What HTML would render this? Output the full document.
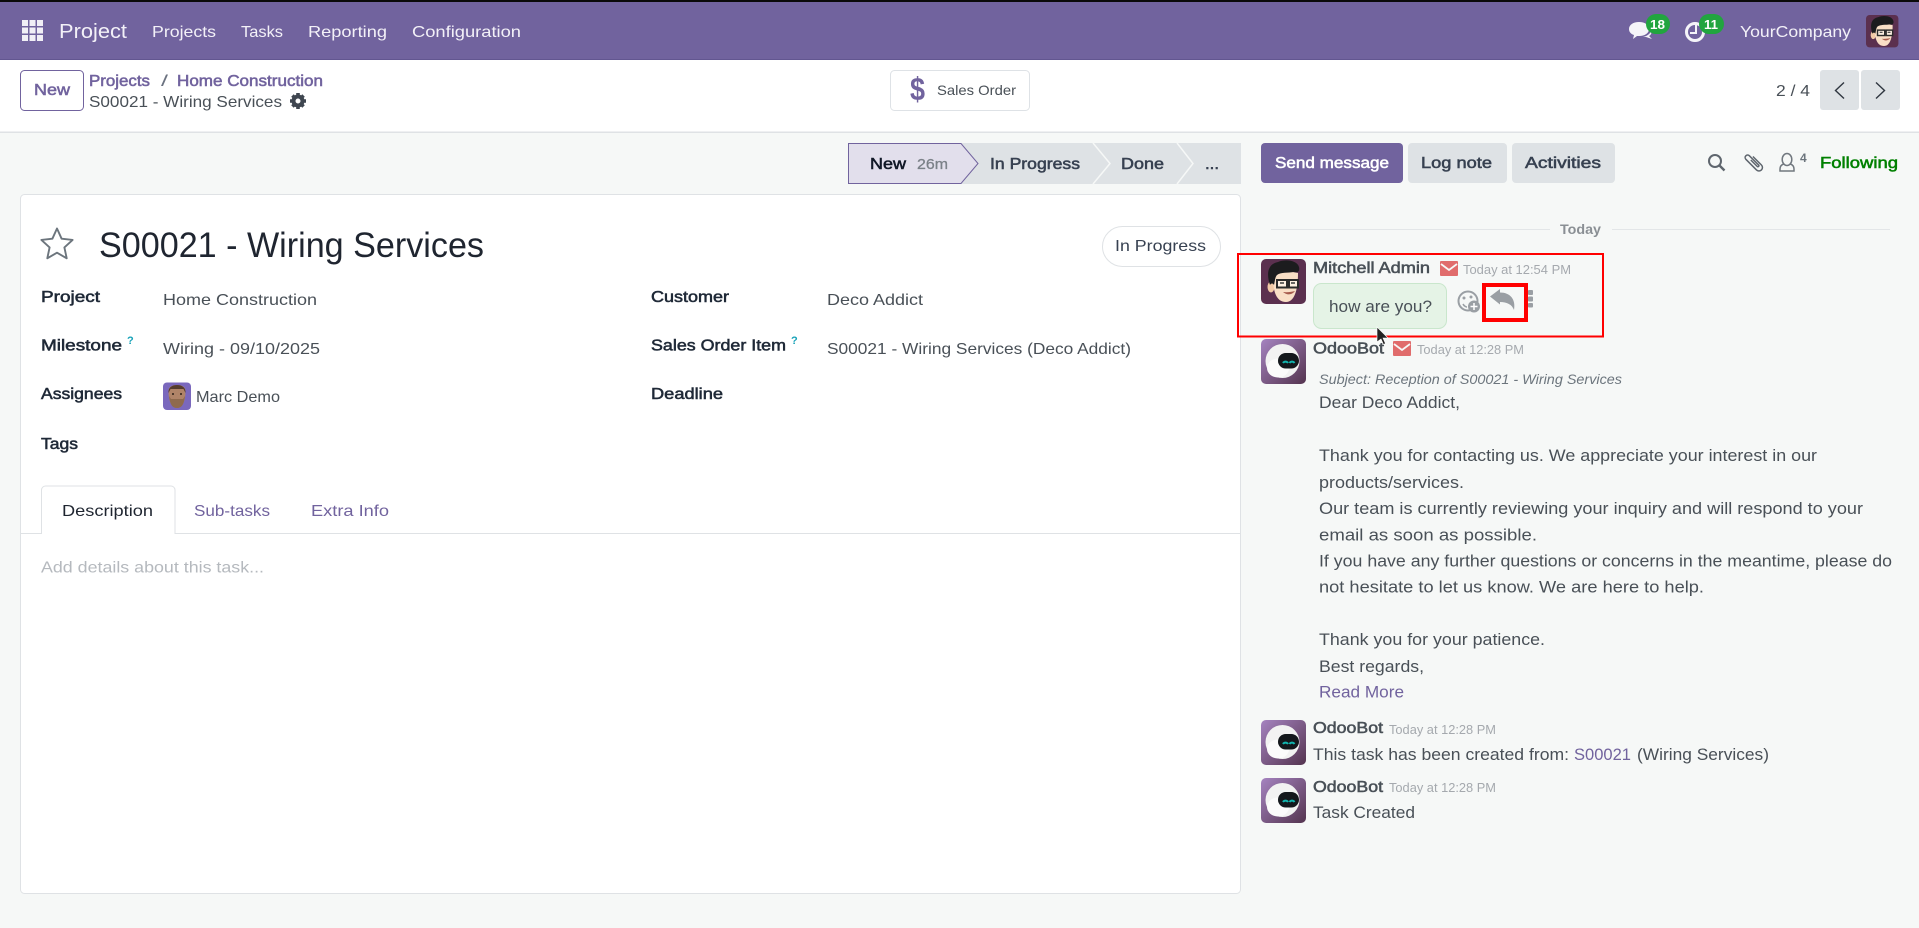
<!DOCTYPE html>
<html lang="en"><head><meta charset="utf-8"><title>S00021 - Wiring Services</title>
<style>
html,body{margin:0;padding:0;background:#f6f8f7;width:1919px;height:928px;overflow:hidden}
svg{display:block;position:absolute;left:0;top:0}
text{font-family:"Liberation Sans",sans-serif;font-size:16px;fill:#495057}
.n{fill:#f3f1f8}
.b{fill:currentColor;stroke:currentColor;stroke-width:.55px}
.l{font-size:16px;color:#1f2937}
.v{fill:#495057;font-size:16px}
.p{fill:#71639e}
.m{fill:#495057;font-size:16.5px}
.nm{color:#495057;font-size:16px}
.t{fill:#a5a9ae;font-size:13px}
.d{fill:#fff;font-weight:bold;font-size:13px}
</style></head><body>
<svg width="1919" height="928" viewBox="0 0 1919 928" xmlns="http://www.w3.org/2000/svg">
<defs>
<linearGradient id="bot" x1="0" y1="0" x2="1" y2="1"><stop offset="0" stop-color="#a583c0"/><stop offset="1" stop-color="#54344f"/></linearGradient>
<g id="botav">
<rect width="45" height="45" rx="5" fill="url(#bot)"/>
<circle cx="21.500" cy="22" r="17" fill="#f2f2f2"/><ellipse cx="17" cy="29" rx="11" ry="9.500" fill="#fbfbfb"/>
<rect x="17" y="14" width="21" height="15.500" rx="7.700" fill="#14181c"/>
<path d="M22 24a3 3 0 0 1 5 0M28.500 24a3 3 0 0 1 5 0" fill="none" stroke="#12b5ae" stroke-width="2"/>
</g>
<g id="mitch">
<rect width="45" height="45" rx="5" fill="#5b304f"/>
<ellipse cx="10" cy="28" rx="3.500" ry="5.500" fill="#f2c9a6"/>
<path d="M12 18C12 32 15 43 25 43C33 43 37 32 37 14L16 10Z" fill="#f9dfc6"/>
<path d="M9 26C5 14 7 5 17 3C24 0 36 1 38 8C39 12 37 14 33 13C27 14 20 13 16 16C14 18 14 22 13 26C12 24 10 24 9 26Z" fill="#1c1c1e"/>
<rect x="16" y="21" width="10" height="7.500" fill="#fdf0e2" stroke="#2b2b2b" stroke-width="2"/>
<rect x="28" y="21" width="9" height="7.500" fill="#fdf0e2" stroke="#2b2b2b" stroke-width="2"/>
<path d="M26 23h2" stroke="#2b2b2b" stroke-width="2"/>
<path d="M19 24h4M30 24h4" stroke="#3a3a3a" stroke-width="1.500"/>
<path d="M22 33c4 3.500 9 3 12-1-4 1-8 1.500-12 1z" fill="#a65b4d"/>
</g>
<g id="env"><rect width="18" height="15" rx="1" fill="#e06c6c"/><path d="M1 3l8 6 8-6" fill="none" stroke="#f6f8f7" stroke-width="1.800"/></g>
</defs>

<!-- top bar -->
<rect width="1919" height="2" fill="#0a0a0a"/>
<rect y="2" width="1919" height="58" fill="#71639e"/>
<rect y="59" width="1919" height="1" fill="#625690"/>
<g fill="#f1eff6"><rect x="22" y="20" width="6" height="6"/><rect x="29.500" y="20" width="6" height="6"/><rect x="37" y="20" width="6" height="6"/><rect x="22" y="27.500" width="6" height="6"/><rect x="29.500" y="27.500" width="6" height="6"/><rect x="37" y="27.500" width="6" height="6"/><rect x="22" y="35" width="6" height="6"/><rect x="29.500" y="35" width="6" height="6"/><rect x="37" y="35" width="6" height="6"/></g>
<text x="59" y="38" class="n" style="font-size:20px" textLength="68" lengthAdjust="spacingAndGlyphs">Project</text>
<text x="152" y="37" class="n" textLength="64" lengthAdjust="spacingAndGlyphs">Projects</text>
<text x="241" y="37" class="n" textLength="42" lengthAdjust="spacingAndGlyphs">Tasks</text>
<text x="308" y="37" class="n" textLength="79" lengthAdjust="spacingAndGlyphs">Reporting</text>
<text x="412" y="37" class="n" textLength="109" lengthAdjust="spacingAndGlyphs">Configuration</text>

<!-- systray -->
<path d="M1639 22c6 0 10 3 10 7s-4 7-10 7h-2l-4 3 1-4c-3-1-5-3-5-6 0-4 4-7 10-7z" fill="#f5f4f9"/>
<path d="M1651 31c1 2 0 4-2 5l3 3-6-2h-3c4-1 7-3 8-6z" fill="#f5f4f9"/>
<rect x="1646" y="14" width="24" height="20" rx="10" fill="#21a53f"/>
<text x="1650" y="29" class="d" textLength="15" lengthAdjust="spacingAndGlyphs">18</text>
<circle cx="1695" cy="32" r="8.500" fill="none" stroke="#f5f4f9" stroke-width="3"/>
<path d="M1696 25v8h-6" fill="none" stroke="#f5f4f9" stroke-width="2"/>
<rect x="1699" y="14" width="25" height="20" rx="10" fill="#21a53f"/>
<text x="1704" y="29" class="d" textLength="14" lengthAdjust="spacingAndGlyphs">11</text>
<text x="1740" y="37" class="n" textLength="111" lengthAdjust="spacingAndGlyphs">YourCompany</text>
<g transform="translate(1866 15) scale(.72)"><use href="#mitch"/></g>

<!-- control panel -->
<rect y="60" width="1919" height="72" fill="#fff"/>
<rect y="131.500" width="1919" height="1.500" fill="#dfe2e5"/>
<rect x="20.500" y="70.500" width="63" height="40" rx="4" fill="#fff" stroke="#71639e"/>
<text x="34" y="95" class="b" style="color:#71639e" textLength="36" lengthAdjust="spacingAndGlyphs">New</text>
<text x="89" y="86" class="b" style="color:#71639e" textLength="61" lengthAdjust="spacingAndGlyphs">Projects</text>
<text x="161" y="86" style="fill:#6b7280" textLength="7" lengthAdjust="spacingAndGlyphs">/</text>
<text x="177" y="86" class="b" style="color:#71639e" textLength="146" lengthAdjust="spacingAndGlyphs">Home Construction</text>
<text x="89" y="107" class="v" textLength="193" lengthAdjust="spacingAndGlyphs">S00021 - Wiring Services</text>
<g transform="translate(298 101)"><circle r="4.500" fill="none" stroke="#3f4650" stroke-width="4"/><path d="M-1.800-8h3.600v3h-3.600zM-1.800 5h3.600v3h-3.600zM-8-1.800h3v3.600h-3zM5-1.800h3v3.600h-3zM-6.800-4.300l2.500-2.500 2.500 2.500-2.500 2.500zM6.800 4.300l-2.500 2.500-2.500-2.500 2.500-2.500zM4.300-6.800l2.500 2.500-2.500 2.500-2.500-2.500zM-4.300 6.800l-2.500-2.500 2.500-2.500 2.500 2.500z" fill="#3f4650"/></g>

<rect x="890.500" y="70.500" width="139" height="40" rx="4" fill="#fff" stroke="#dee2e6"/>
<text x="910" y="100" class="p" style="font-size:32px;font-weight:bold" textLength="15" lengthAdjust="spacingAndGlyphs">$</text>
<text x="937" y="95" style="font-size:14px;fill:#495057" textLength="79" lengthAdjust="spacingAndGlyphs">Sales Order</text>

<text x="1776" y="96" class="v" textLength="34" lengthAdjust="spacingAndGlyphs">2 / 4</text>
<rect x="1820" y="70" width="39" height="40" rx="3" fill="#dee2e5"/>
<rect x="1861" y="70" width="39" height="40" rx="3" fill="#dee2e5"/>
<path d="M1844 82.500l-8.500 8 8.500 8" fill="none" stroke="#2f3640" stroke-width="1.400"/>
<path d="M1876 82.500l8.500 8-8.500 8" fill="none" stroke="#2f3640" stroke-width="1.400"/>

<!-- status bar -->
<rect x="960" y="143" width="281" height="41" fill="#dee2e5"/>
<path d="M848.500 143.500H961l17 20-17 20H848.500z" fill="#e2dfec" stroke="#71639e"/>
<path d="M1093 143l17 20.500-17 20.500M1177 143l16 20.500-16 20.500" fill="none" stroke="#f6f8f7" stroke-width="1.500"/>
<text x="870" y="169" class="b" style="color:#111827" textLength="36" lengthAdjust="spacingAndGlyphs">New</text>
<text x="917" y="169" class="b" style="color:#7b8188;font-size:15px;stroke-width:.3px" textLength="31" lengthAdjust="spacingAndGlyphs">26m</text>
<text x="990" y="169" class="b" style="color:#374151" textLength="90" lengthAdjust="spacingAndGlyphs">In Progress</text>
<text x="1121" y="169" class="b" style="color:#374151" textLength="43" lengthAdjust="spacingAndGlyphs">Done</text>
<text x="1205" y="169" class="b" style="color:#374151" textLength="14" lengthAdjust="spacingAndGlyphs">...</text>

<!-- sheet -->
<rect x="20.500" y="194.500" width="1220" height="699" rx="4" fill="#fff" stroke="#dfe2e5"/>
<path d="M57 228.500l4.600 10.200 11 1.200-8.200 7.500 2.300 10.900-9.700-5.600-9.700 5.600 2.300-10.900-8.200-7.500 11-1.200z" fill="none" stroke="#6c757d" stroke-width="1.900" stroke-linejoin="round"/>
<text x="99" y="257" style="font-size:35px;fill:#1f2530" textLength="385" lengthAdjust="spacingAndGlyphs">S00021 - Wiring Services</text>
<rect x="1102.500" y="226.500" width="118" height="40" rx="20" fill="#fff" stroke="#dfe2e5"/>
<text x="1115" y="251" class="v" style="fill:#374151" textLength="91" lengthAdjust="spacingAndGlyphs">In Progress</text>

<text x="41" y="302" class="b l" textLength="59" lengthAdjust="spacingAndGlyphs">Project</text>
<text x="163" y="305" class="v" textLength="154" lengthAdjust="spacingAndGlyphs">Home Construction</text>
<text x="41" y="350.500" class="b l" textLength="81" lengthAdjust="spacingAndGlyphs">Milestone</text>
<text x="127" y="344" style="font-size:11px;font-weight:bold;fill:#17a2b8">?</text>
<text x="163" y="354" class="v" textLength="157" lengthAdjust="spacingAndGlyphs">Wiring - 09/10/2025</text>
<text x="41" y="399" class="b l" textLength="81" lengthAdjust="spacingAndGlyphs">Assignees</text>
<rect x="163" y="382.500" width="28" height="27.500" rx="4" fill="#7a68bd"/>
<path d="M168.500 391c0-4 3-6 8.500-6s8.500 2 8.500 6c0 9-2.500 17-8.500 17s-8.500-8-8.500-17z" fill="#b08468"/>
<path d="M169 396c1 8 3 12 8 12s7-4 8-12l-2 3h-12z" fill="#8f6a4d"/>
<path d="M168.500 393c-.5-5 3-8 8.500-8s9 3 8.500 8l-2-4h-13z" fill="#553c2e"/>
<path d="M172 394h2M180 394h2" stroke="#2e2019" stroke-width="1.500"/>
<text x="196" y="402" class="v" textLength="84" lengthAdjust="spacingAndGlyphs">Marc Demo</text>
<text x="41" y="449" class="b l" textLength="37" lengthAdjust="spacingAndGlyphs">Tags</text>

<text x="651" y="302" class="b l" textLength="78" lengthAdjust="spacingAndGlyphs">Customer</text>
<text x="827" y="305" class="v" textLength="96" lengthAdjust="spacingAndGlyphs">Deco Addict</text>
<text x="651" y="350.500" class="b l" textLength="135" lengthAdjust="spacingAndGlyphs">Sales Order Item</text>
<text x="791" y="344" style="font-size:11px;font-weight:bold;fill:#17a2b8">?</text>
<text x="827" y="354" class="v" textLength="304" lengthAdjust="spacingAndGlyphs">S00021 - Wiring Services (Deco Addict)</text>
<text x="651" y="399" class="b l" textLength="72" lengthAdjust="spacingAndGlyphs">Deadline</text>

<path d="M21 533.500H41.500V490a4 4 0 0 1 4-4H171a4 4 0 0 1 4 4V533.500H1240" fill="none" stroke="#dfe2e5"/>
<rect x="42" y="530" width="132.500" height="4.500" fill="#fff"/>
<text x="62" y="516" style="fill:#1f2530" textLength="91" lengthAdjust="spacingAndGlyphs">Description</text>
<text x="194" y="516" class="p" textLength="76" lengthAdjust="spacingAndGlyphs">Sub-tasks</text>
<text x="311" y="516" class="p" textLength="78" lengthAdjust="spacingAndGlyphs">Extra Info</text>
<text x="41" y="572.500" style="fill:#b5b9be" textLength="223" lengthAdjust="spacingAndGlyphs">Add details about this task...</text>

<!-- chatter -->
<rect x="1261" y="143" width="142" height="40" rx="4" fill="#71639e"/>
<rect x="1408" y="143" width="99" height="40" rx="4" fill="#dee2e5"/>
<rect x="1512" y="143" width="103" height="40" rx="4" fill="#dee2e5"/>
<text x="1275" y="168" class="b" style="color:#fff" textLength="114" lengthAdjust="spacingAndGlyphs">Send message</text>
<text x="1421" y="168" class="b" style="color:#374151" textLength="71" lengthAdjust="spacingAndGlyphs">Log note</text>
<text x="1525" y="168" class="b" style="color:#374151" textLength="76" lengthAdjust="spacingAndGlyphs">Activities</text>
<circle cx="1715" cy="161" r="6" fill="none" stroke="#5f666e" stroke-width="2"/>
<path d="M1719.500 165.500l5 5" stroke="#5f666e" stroke-width="2.400"/>
<g transform="translate(1754 162.500) rotate(-45)"><path d="M3.500-5V7a3.500 3.500 0 0 1-7 0V-8a2.500 2.500 0 0 1 5 0V5a1 1 0 0 1-2 0V-4" fill="none" stroke="#5f666e" stroke-width="1.500"/></g>
<ellipse cx="1787" cy="159.500" rx="4.800" ry="6" fill="none" stroke="#71787f" stroke-width="1.500"/>
<path d="M1783.500 164c-2.500 1-3.500 3-3.500 5v2h14v-2c0-2-1-4-3.500-5" fill="none" stroke="#71787f" stroke-width="1.500"/>
<text x="1800" y="162" style="font-size:12px;font-weight:bold;fill:#6c757d">4</text>
<text x="1820" y="168" class="b" style="color:#008000" textLength="78" lengthAdjust="spacingAndGlyphs">Following</text>

<path d="M1271 229.500H1550M1612 229.500H1890" stroke="#e3e6e8"/>
<text x="1560" y="234" style="font-size:14px;font-weight:bold;fill:#8a8f94" textLength="41" lengthAdjust="spacingAndGlyphs">Today</text>

<!-- msg 1 -->
<g transform="translate(1261 259)"><use href="#mitch"/></g>
<text x="1313" y="273" class="b nm" textLength="117" lengthAdjust="spacingAndGlyphs">Mitchell Admin</text>
<use href="#env" x="1440" y="261"/>
<text x="1463" y="274" class="t" textLength="108" lengthAdjust="spacingAndGlyphs">Today at 12:54 PM</text>
<rect x="1313.500" y="283.500" width="133" height="45" rx="8" fill="#e5f3e6" stroke="#c9e6cc"/>
<text x="1329" y="312" class="m" textLength="103" lengthAdjust="spacingAndGlyphs">how are you?</text>
<circle cx="1468" cy="301" r="9.500" fill="none" stroke="#9a9fa4" stroke-width="2"/>
<circle cx="1464" cy="298" r="1.500" fill="#9a9fa4"/><circle cx="1471" cy="297" r="1.500" fill="#9a9fa4"/><path d="M1463 304c1 2 3 3 4 3" fill="none" stroke="#9a9fa4" stroke-width="1.500"/>
<circle cx="1474" cy="306.500" r="6" fill="#9a9fa4"/><path d="M1474 303v7M1470.500 306.500h7" stroke="#fff" stroke-width="1.500"/>
<path d="M1490 296.500L1500 289V292.500C1510 292.500 1516 299 1514 310C1512 304.500 1507 302 1500 302V304.500Z" fill="#9a9fa4"/>
<rect x="1484" y="285" width="42" height="35" fill="none" stroke="#ff0000" stroke-width="4"/>
<rect x="1528" y="290" width="5" height="5" rx="1" fill="#9a9fa4"/><rect x="1528" y="296.500" width="5" height="5" rx="1" fill="#9a9fa4"/><rect x="1528" y="303" width="5" height="4.500" rx="1" fill="#9a9fa4"/>
<rect x="1238" y="254" width="365" height="82.500" fill="none" stroke="#ff0000" stroke-width="2"/>
<path d="M1377 327v15l4-3 2.500 5.500 2-1-2.500-5.500h5z" fill="#222" stroke="#fff" stroke-width=".6"/>

<!-- msg 2 -->
<g transform="translate(1261 339)"><use href="#botav"/></g>
<text x="1313" y="353.500" class="b nm" textLength="71" lengthAdjust="spacingAndGlyphs">OdooBot</text>
<use href="#env" x="1393" y="341"/>
<text x="1417" y="354" class="t" textLength="107" lengthAdjust="spacingAndGlyphs">Today at 12:28 PM</text>
<text x="1319" y="384" style="font-size:14px;font-style:italic;fill:#6c757d" textLength="303" lengthAdjust="spacingAndGlyphs">Subject: Reception of S00021 - Wiring Services</text>
<text x="1319" y="408" class="m" textLength="141" lengthAdjust="spacingAndGlyphs">Dear Deco Addict,</text>
<text x="1319" y="461" class="m" textLength="498" lengthAdjust="spacingAndGlyphs">Thank you for contacting us. We appreciate your interest in our</text>
<text x="1319" y="488" class="m" textLength="145" lengthAdjust="spacingAndGlyphs">products/services.</text>
<text x="1319" y="514" class="m" textLength="544" lengthAdjust="spacingAndGlyphs">Our team is currently reviewing your inquiry and will respond to your</text>
<text x="1319" y="540.500" class="m" textLength="218" lengthAdjust="spacingAndGlyphs">email as soon as possible.</text>
<text x="1319" y="566.500" class="m" textLength="573" lengthAdjust="spacingAndGlyphs">If you have any further questions or concerns in the meantime, please do</text>
<text x="1319" y="592.500" class="m" textLength="385" lengthAdjust="spacingAndGlyphs">not hesitate to let us know. We are here to help.</text>
<text x="1319" y="645" class="m" textLength="226" lengthAdjust="spacingAndGlyphs">Thank you for your patience.</text>
<text x="1319" y="672" class="m" textLength="105" lengthAdjust="spacingAndGlyphs">Best regards,</text>
<text x="1319" y="697.500" class="m" style="fill:#71639e" textLength="85" lengthAdjust="spacingAndGlyphs">Read More</text>

<!-- msg 3 -->
<g transform="translate(1261 720)"><use href="#botav"/></g>
<text x="1313" y="733" class="b nm" textLength="70" lengthAdjust="spacingAndGlyphs">OdooBot</text>
<text x="1389" y="734" class="t" textLength="107" lengthAdjust="spacingAndGlyphs">Today at 12:28 PM</text>
<text x="1313" y="760" class="m" textLength="256" lengthAdjust="spacingAndGlyphs">This task has been created from:</text>
<text x="1574" y="760" class="m" style="fill:#71639e" textLength="57" lengthAdjust="spacingAndGlyphs">S00021</text>
<text x="1637" y="760" class="m" textLength="132" lengthAdjust="spacingAndGlyphs">(Wiring Services)</text>

<!-- msg 4 -->
<g transform="translate(1261 778)"><use href="#botav"/></g>
<text x="1313" y="792" class="b nm" textLength="70" lengthAdjust="spacingAndGlyphs">OdooBot</text>
<text x="1389" y="792" class="t" textLength="107" lengthAdjust="spacingAndGlyphs">Today at 12:28 PM</text>
<text x="1313" y="818" class="m" textLength="102" lengthAdjust="spacingAndGlyphs">Task Created</text>
</svg>
</body></html>
